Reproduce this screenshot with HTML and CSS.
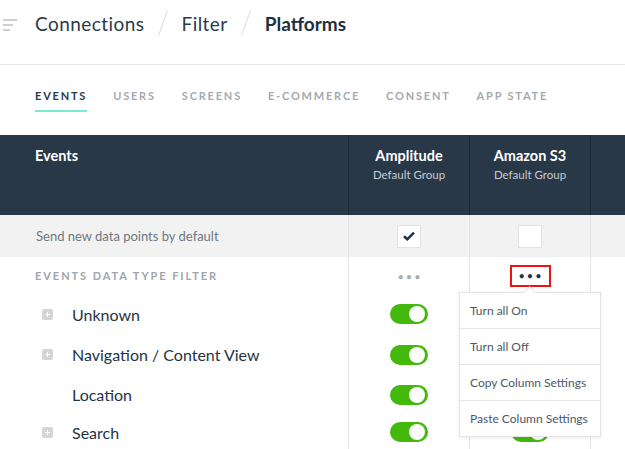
FILE: index.html
```html
<!DOCTYPE html>
<html>
<head>
<meta charset="utf-8">
<link rel="stylesheet" href="styles.css">
</head>
<body>
<header class="topbar">
  <svg class="sort-icon" width="16" height="14" viewBox="0 0 16 14">
    <rect x="0" y="0" width="14" height="2" fill="#cdd0d3"/>
    <rect x="0" y="5" width="10" height="2" fill="#cdd0d3"/>
    <rect x="0" y="10" width="7" height="2" fill="#cdd0d3"/>
  </svg>
  <nav class="crumbs">
    <span class="crumb">Connections</span>
    <svg class="sep" width="10" height="26" viewBox="0 0 10 26"><line x1="0.5" y1="25.5" x2="9.5" y2="0.5" stroke="#d6d9dc" stroke-width="1"/></svg>
    <span class="crumb">Filter</span>
    <svg class="sep" width="10" height="26" viewBox="0 0 10 26"><line x1="0.5" y1="25.5" x2="9.5" y2="0.5" stroke="#d6d9dc" stroke-width="1"/></svg>
    <span class="crumb current">Platforms</span>
  </nav>
</header>

<div class="tabs">
  <span class="tab active">EVENTS</span>
  <span class="tab">USERS</span>
  <span class="tab">SCREENS</span>
  <span class="tab">E-COMMERCE</span>
  <span class="tab">CONSENT</span>
  <span class="tab">APP STATE</span>
</div>

<div class="table">
  <div class="row head">
    <div class="cell first"><span class="head-title">Events</span></div>
    <div class="cell col"><span class="platform">Amplitude</span><span class="group">Default Group</span></div>
    <div class="cell col"><span class="platform">Amazon S3</span><span class="group">Default Group</span></div>
    <div class="cell col"></div>
  </div>

  <div class="row default">
    <div class="cell first"><span class="default-label">Send new data points by default</span></div>
    <div class="cell col center"><span class="checkbox">
      <svg width="14" height="12" viewBox="0 0 14 12"><path d="M2 6.2 L5.3 9.3 L12 2.6" fill="none" stroke="#1f3347" stroke-width="2.6"/></svg>
    </span></div>
    <div class="cell col center"><span class="checkbox"></span></div>
    <div class="cell col"></div>
  </div>

  <div class="row filter">
    <div class="cell first"><span class="filter-label">EVENTS DATA TYPE FILTER</span></div>
    <div class="cell col center"><span class="dots">&bull;&bull;&bull;</span></div>
    <div class="cell col center menu-anchor">
      <span class="dots dark highlighted">&bull;&bull;&bull;</span>
      <div class="menu">
        <span class="caret"></span>
        <div class="menu-item">Turn all On</div>
        <div class="menu-item">Turn all Off</div>
        <div class="menu-item">Copy Column Settings</div>
        <div class="menu-item">Paste Column Settings</div>
      </div>
    </div>
    <div class="cell col"></div>
  </div>

  <div class="row item r1">
    <div class="cell first"><span class="expander"></span><span class="item-name">Unknown</span></div>
    <div class="cell col center"><span class="toggle"></span></div>
    <div class="cell col center"><span class="toggle"></span></div>
    <div class="cell col"></div>
  </div>
  <div class="row item r2">
    <div class="cell first"><span class="expander"></span><span class="item-name">Navigation / Content View</span></div>
    <div class="cell col center"><span class="toggle"></span></div>
    <div class="cell col center"><span class="toggle"></span></div>
    <div class="cell col"></div>
  </div>
  <div class="row item r3">
    <div class="cell first"><span class="expander blank"></span><span class="item-name">Location</span></div>
    <div class="cell col center"><span class="toggle"></span></div>
    <div class="cell col center"><span class="toggle"></span></div>
    <div class="cell col"></div>
  </div>
  <div class="row item r4">
    <div class="cell first"><span class="expander"></span><span class="item-name">Search</span></div>
    <div class="cell col center"><span class="toggle"></span></div>
    <div class="cell col center"><span class="toggle"></span></div>
    <div class="cell col"></div>
  </div>
</div>
</body>
</html>
```

FILE: styles.css
```css
* { box-sizing: border-box; }

html, body {
  margin: 0;
  padding: 0;
  background: #ffffff;
  font-family: "Lato", "Noto Sans", sans-serif;
  color: #243444;
  overflow: hidden;
}

.topbar {
  height: 65px;
  border-bottom: 1px solid #e6e7e8;
  display: flex;
  align-items: flex-start;
  padding-top: 10px;
}

.sort-icon {
  margin: 9px 0 0 3px;
  flex: none;
}

.crumbs {
  display: flex;
  align-items: center;
  margin-left: 16px;
}

.crumb {
  font-size: 19px;
  line-height: 25px;
  color: #2a3a4a;
  letter-spacing: 0.45px;
}

.crumb.current {
  font-weight: 700;
  color: #1f2f3f;
  letter-spacing: 0;
}

.sep {
  margin: 0 14px 0 13px;
}

.tabs {
  height: 70px;
  display: flex;
  gap: 26px;
  padding: 24px 0 0 35px;
}

.tab {
  font-size: 11px;
  line-height: 14px;
  font-weight: 700;
  letter-spacing: 1.8px;
  color: #a4aaaf;
  padding-bottom: 7px;
  border-bottom: 2px solid transparent;
  align-self: flex-start;
}

.tab.active {
  color: #2a3a4a;
  border-bottom-color: #7be9d5;
}

.table {
  display: flex;
  flex-direction: column;
}

.row {
  display: grid;
  grid-template-columns: 348px 121px 121px 1fr;
}

.cell.col {
  border-left: 1px solid #e4e5e6;
}

.cell.center {
  display: flex;
  justify-content: center;
  align-items: center;
}

.cell.first {
  padding-left: 35px;
  display: flex;
  align-items: center;
}

/* header */
.row.head {
  height: 80px;
  background: #293846;
  color: #ffffff;
}

.row.head .cell.col {
  border-left-color: #182735;
  display: flex;
  flex-direction: column;
  align-items: center;
  padding-top: 12px;
}

.row.head .cell.first {
  align-items: flex-start;
  padding-top: 12px;
}

.head-title,
.platform {
  font-size: 14.5px;
  line-height: 18px;
  font-weight: 700;
}

.group {
  font-size: 11.5px;
  line-height: 14px;
  color: #c5ccd3;
  margin-top: 3px;
}

/* default row */
.row.default {
  height: 42px;
  background: #f2f2f2;
}

.default-label {
  font-size: 13px;
  color: #6d7882;
  padding-left: 1px;
}

.checkbox {
  width: 24px;
  height: 23px;
  background: #ffffff;
  border: 1px solid #e2e3e4;
  display: flex;
  align-items: center;
  justify-content: center;
}

/* filter row */
.row.filter {
  height: 37px;
}

.filter-label {
  font-size: 11px;
  font-weight: 700;
  letter-spacing: 1.95px;
  color: #a0a6ab;
}

.dots {
  font-size: 11px;
  letter-spacing: 2px;
  color: #a9aeb2;
  line-height: 1;
  padding-left: 2px;
  padding-top: 2px;
}

.dots.dark {
  color: #1f3347;
}

.highlighted {
  width: 41px;
  height: 22px;
  border: 2px solid #ee1111;
  display: flex;
  align-items: center;
  justify-content: center;
  padding: 0 0 0 2px;
}

.menu-anchor {
  position: relative;
}

.menu {
  position: absolute;
  left: -11px;
  top: 35px;
  width: 142px;
  background: #ffffff;
  border: 1px solid #e3e4e5;
  box-shadow: 0 1px 4px rgba(0, 0, 0, 0.08);
  z-index: 5;
}

.caret {
  position: absolute;
  top: -5px;
  left: 65px;
  width: 9px;
  height: 9px;
  background: #ffffff;
  border-left: 1px solid #e3e4e5;
  border-top: 1px solid #e3e4e5;
  transform: rotate(45deg);
}

.menu-item {
  height: 36px;
  display: flex;
  align-items: center;
  padding-left: 10px;
  font-size: 12px;
  color: #4b5966;
  border-top: 1px solid #e6e7e8;
  position: relative;
  white-space: nowrap;
}

.menu-item:first-of-type {
  border-top: none;
  height: 35px;
}

/* item rows */
.row.item.r1 { height: 40px; }
.row.item.r2 { height: 41px; }
.row.item.r3 { height: 39px; }
.row.item.r4 { height: 36px; }

.expander {
  width: 11px;
  height: 11px;
  border-radius: 2px;
  background: #d3d5d7;
  margin-left: 7px;
  margin-right: 19px;
  position: relative;
  flex: none;
}

.expander::before,
.expander::after {
  content: "";
  position: absolute;
  background: #ffffff;
}

.expander::before {
  left: 3px;
  top: 5px;
  width: 5px;
  height: 1px;
}

.expander::after {
  left: 5px;
  top: 3px;
  width: 1px;
  height: 5px;
}

.expander.blank {
  background: transparent;
}

.expander.blank::before,
.expander.blank::after {
  display: none;
}

.item-name {
  font-size: 16px;
  color: #243444;
}

.toggle {
  width: 38px;
  height: 20px;
  border-radius: 10px;
  background: #42b90c;
  position: relative;
}

.toggle::after {
  content: "";
  position: absolute;
  right: 3px;
  top: 2px;
  width: 16px;
  height: 16px;
  border-radius: 50%;
  background: #ffffff;
}
```
